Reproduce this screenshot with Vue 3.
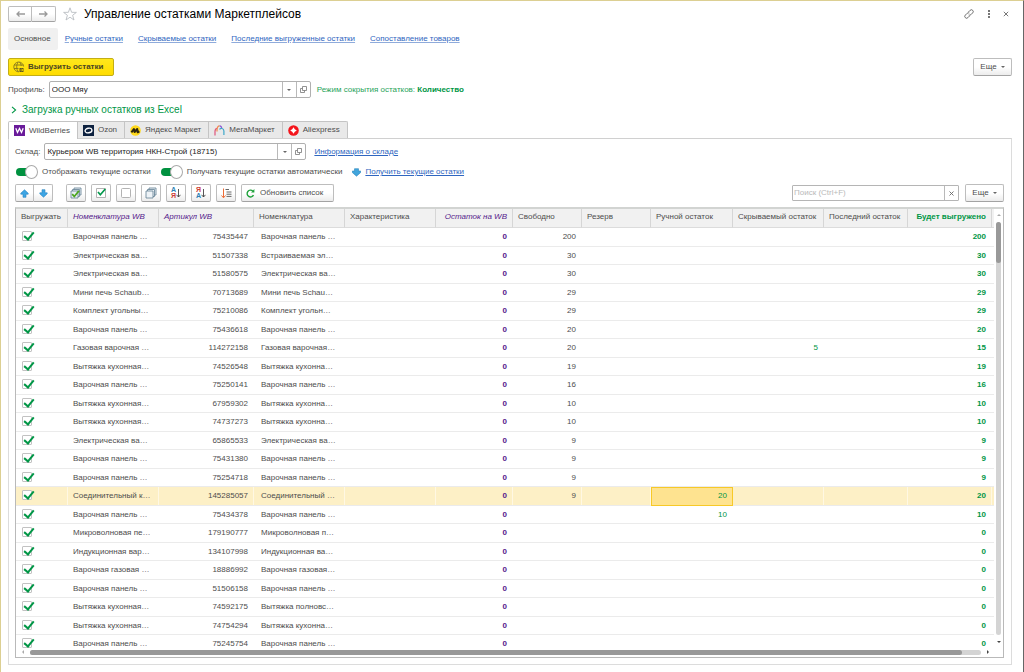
<script setup>
import { ref } from 'vue'

const profile = ref('ООО Мяу')
const warehouse = ref('Курьером WB территория НКН-Строй (18715)')
const search = ref('')
const showCurrent = ref(true)
const autoFetch = ref(true)

const sections = ['Ручные остатки', 'Скрываемые остатки', 'Последние выгруженные остатки', 'Сопоставление товаров']

const columns = [
  { title: 'Выгружать', width: 52 },
  { title: 'Номенклатура WB', width: 91, kind: 'wb' },
  { title: 'Артикул WB', width: 95, kind: 'wb' },
  { title: 'Номенклатура', width: 91 },
  { title: 'Характеристика', width: 91 },
  { title: 'Остаток на WB', width: 77, kind: 'wb end' },
  { title: 'Свободно', width: 69 },
  { title: 'Резерв', width: 69 },
  { title: 'Ручной остаток', width: 82 },
  { title: 'Скрываемый остаток', width: 91 },
  { title: 'Последний остаток', width: 84 },
  { title: 'Будет выгружено', width: 84, kind: 'total end' },
  { title: '', width: 4 }
]

const toRow = ([wbName, article, name, free, manual, hidden, total]) =>
  ({ checked: true, wbName, article, name, free, manual, hidden, total })

const rows = ref([
  ['Варочная панель …', '75435447', 'Варочная панель …', '200', '', '', '200'],
  ['Электрическая ва…', '51507338', 'Встраиваемая эл…', '30', '', '', '30'],
  ['Электрическая ва…', '51580575', 'Электрическая ва…', '30', '', '', '30'],
  ['Мини печь Schaub…', '70713689', 'Мини печь Schau…', '29', '', '', '29'],
  ['Комплект угольны…', '75210086', 'Комплект угольн…', '29', '', '', '29'],
  ['Варочная панель …', '75436618', 'Варочная панель …', '20', '', '', '20'],
  ['Газовая варочная …', '114272158', 'Газовая варочная…', '20', '', '5', '15'],
  ['Вытяжка кухонная…', '74526548', 'Вытяжка кухонна…', '19', '', '', '19'],
  ['Варочная панель …', '75250141', 'Варочная панель …', '16', '', '', '16'],
  ['Вытяжка кухонная…', '67959302', 'Вытяжка кухонна…', '10', '', '', '10'],
  ['Вытяжка кухонная…', '74737273', 'Вытяжка кухонна…', '10', '', '', '10'],
  ['Электрическая ва…', '65865533', 'Электрическая ва…', '9', '', '', '9'],
  ['Варочная панель …', '75431380', 'Варочная панель …', '9', '', '', '9'],
  ['Варочная панель …', '75254718', 'Варочная панель …', '9', '', '', '9'],
  ['Соединительный к…', '145285057', 'Соединительный …', '9', '20', '', '20'],
  ['Варочная панель …', '75434378', 'Варочная панель …', '', '10', '', '10'],
  ['Микроволновая пе…', '179190777', 'Микроволновая п…', '', '', '', '0'],
  ['Индукционная вар…', '134107998', 'Индукционная ва…', '', '', '', '0'],
  ['Варочная газовая …', '18886992', 'Варочная газовая…', '', '', '', '0'],
  ['Варочная панель …', '51506158', 'Варочная панель …', '', '', '', '0'],
  ['Вытяжка кухонная…', '74592175', 'Вытяжка полновс…', '', '', '', '0'],
  ['Вытяжка кухонная…', '74754294', 'Вытяжка кухонна…', '', '', '', '0'],
  ['Варочная панель …', '75245754', 'Варочная панель …', '', '', '', '0']
].map(toRow))

const selected = ref(14)
</script>

<template>
  <main class="window">
    <header class="titlebar">
      <div class="pair">
        <button class="btn" type="button" aria-label="Назад">
          <svg width="11" height="8" viewBox="0 0 11 8"><path d="M4.500 1.500 2 4l2.500 2.500M2 4H10" fill="none" stroke="#999" stroke-width="1.300" /></svg>
        </button>
        <button class="btn" type="button" aria-label="Вперёд">
          <svg width="11" height="8" viewBox="0 0 11 8"><path d="M6.500 1.500 9 4 6.500 6.500M9 4H1" fill="none" stroke="#999" stroke-width="1.300" /></svg>
        </button>
      </div>
      <svg class="star" width="14" height="14" viewBox="0 0 14 14"><path d="M7 .8l1.600 4.500 4.800.1-3.800 2.900 1.400 4.700L7 10.200 3 13l1.400-4.700L.6 5.400l4.800-.1z" fill="#fff" stroke="#b9bdc2" stroke-width=".9" /></svg>
      <h1>Управление остатками Маркетплейсов</h1>
      <div class="window-tools">
        <button class="plain" type="button" aria-label="Ссылка">
          <svg width="12" height="12" viewBox="0 0 12 12" fill="none" stroke="#666" stroke-width=".9"><g transform="rotate(-45 6 6)"><path d="M5 7.800H2.600a1.800 1.800 0 0 1 0-3.600h2.600a1.800 1.800 0 0 1 1.700 1.300M7 4.200h2.400a1.800 1.800 0 0 1 0 3.600H6.800a1.800 1.800 0 0 1-1.700-1.300" /></g></svg>
        </button>
        <button class="plain" type="button" aria-label="Меню">
          <svg width="4" height="10" viewBox="0 0 4 10" fill="#777"><path d="M1 1h2v2H1zM1 4h2v2H1zM1 7h2v2H1z" /></svg>
        </button>
        <button class="plain" type="button" aria-label="Закрыть">
          <svg width="6" height="6" viewBox="0 0 6 6"><path d="M.8.8l4.400 4.400M5.200.8.8 5.200" stroke="#777" stroke-width="1" /></svg>
        </button>
      </div>
    </header>

    <nav class="sections">
      <span class="current">Основное</span>
      <a v-for="s in sections" :key="s" href="#">{{ s }}</a>
    </nav>

    <div class="commands">
      <button class="btn primary" type="button">
        <svg width="12" height="12" viewBox="0 0 12 12" fill="none" stroke="#857720" stroke-width=".9"><path d="M10.600 5.500A4.900 4.900 0 1 0 6 10.800M1 4h9.300M1 7.500h4.500M5 1.200C3.200 3.500 3.200 8 5.200 10.700M6.500 1.200c1.200 1.200 1.600 2.400 1.700 3.800" /><path d="M6.500 7h4v4h-4z" fill="#5f5820" stroke="none" /><path d="M7.300 9h2.500M8.700 7.900 9.900 9l-1.200 1.100" stroke="#ffe000" stroke-width=".7" /></svg>
        <span>Выгрузить остатки</span>
      </button>
      <button class="btn more" type="button">Еще <i class="caret"></i></button>
    </div>

    <div class="field-row">
      <label for="profile">Профиль:</label>
      <div class="combo">
        <input id="profile" v-model="profile" type="text">
        <button type="button" aria-label="Выбрать профиль"><i class="caret"></i></button>
        <button type="button" aria-label="Открыть профиль">
          <svg width="7" height="7" viewBox="0 0 7 7" fill="none" stroke="#777" stroke-width=".8"><path d="M2.500.5h4v4h-4zM2.500 2.500h-2v4h4v-2" /></svg>
        </button>
      </div>
      <p class="mode">Режим сокрытия остатков: <b>Количество</b></p>
    </div>

    <button class="group" type="button">
      <svg width="6" height="8" viewBox="0 0 6 8"><path d="M1 .8 4.600 4 1 7.200" fill="none" stroke="#009646" stroke-width="1.100" /></svg>
      <span>Загрузка ручных остатков из Excel</span>
    </button>

    <div class="tabs" role="tablist">
      <button class="tab active" type="button" role="tab" aria-selected="true">
        <svg width="11" height="11" viewBox="0 0 11 11"><path d="M0 0h11v11H0z" fill="#6a1b9a" /><path d="M1.800 3.300l1.700 4.200 2-4 2 4 1.700-4.200" fill="none" stroke="#fff" stroke-width="1.300" /></svg>
        WildBerries
      </button>
      <button class="tab" type="button" role="tab">
        <svg width="11" height="11" viewBox="0 0 11 11"><path d="M0 0h11v11H0z" fill="#0e2240" /><ellipse cx="5.500" cy="5.500" rx="3.500" ry="2.300" fill="none" stroke="#fff" stroke-width="1.300" transform="rotate(-12 5.500 5.500)" /></svg>
        Ozon
      </button>
      <button class="tab" type="button" role="tab">
        <svg width="11" height="11" viewBox="0 0 11 11"><circle cx="5.500" cy="5.500" r="5.300" fill="#ffd91a" /><path d="M1.400 7.400 3.900 4l.7 3L7.200 4l.5 3.300 1.700-.9" fill="none" stroke="#2b2410" stroke-width="2" stroke-linejoin="round" /></svg>
        Яндекс Маркет
      </button>
      <button class="tab" type="button" role="tab">
        <svg width="11" height="11" viewBox="0 0 11 11" fill="none" stroke-width="1.200"><path d="M1 10.500V6.500C1 4.200 2 3.400 3.200 3.400" stroke="#e0557c" /><path d="M3 6.500V5.500C3 2 4.200.8 5.600.8" stroke="#f08a4c" /><path d="M5.600.8C7.200.8 7.800 2.200 7.800 4" stroke="#8d5bd6" /><path d="M5.600 4.500C6 3 9.800 2.800 9.900 6v4" stroke="#3fa7c9" /></svg>
        МегаМаркет
      </button>
      <button class="tab" type="button" role="tab">
        <svg width="11" height="11" viewBox="0 0 11 11"><circle cx="5.500" cy="5.500" r="5.300" fill="#f4151c" /><path d="M5.500 2.200 6.800 4.200 8.800 5.500 6.800 6.800 5.500 8.800 4.200 6.800 2.200 5.500 4.200 4.200z" fill="#fff" /></svg>
        Aliexpress
      </button>
    </div>

    <section class="panel">
      <div class="field-row">
        <label for="warehouse">Склад:</label>
        <div class="combo">
          <input id="warehouse" v-model="warehouse" type="text">
          <button type="button" aria-label="Выбрать склад"><i class="caret"></i></button>
          <button type="button" aria-label="Открыть склад">
            <svg width="7" height="7" viewBox="0 0 7 7" fill="none" stroke="#777" stroke-width=".8"><path d="M2.500.5h4v4h-4zM2.500 2.500h-2v4h4v-2" /></svg>
          </button>
        </div>
        <a class="info" href="#">Информация о складе</a>
      </div>

      <div class="switches">
        <label><input v-model="showCurrent" class="switch" type="checkbox">Отображать текущие остатки</label>
        <label><input v-model="autoFetch" class="switch" type="checkbox">Получать текущие остатки автоматически</label>
        <a href="#">
          <svg width="9" height="9" viewBox="0 0 9 9"><path d="M2.500.7h4v2.300h2.200v1.500L4.500 8.200.3 4.500V3h2.200z" fill="#42a5dc" stroke="#2c86bd" stroke-width=".6" /></svg>
          <span>Получить текущие остатки</span>
        </a>
      </div>

      <div class="toolbar">
        <div class="pair">
          <button class="btn" type="button" aria-label="Переместить вверх">
            <svg width="9" height="9" viewBox="0 0 9 9"><path d="M3 8.300h3V5.200h2.200v-1L4.500.8.8 4.200v1H3z" fill="#3da5e4" stroke="#2a84c0" stroke-width=".6" /></svg>
          </button>
          <button class="btn" type="button" aria-label="Переместить вниз">
            <svg width="9" height="9" viewBox="0 0 9 9"><path d="M3 .7h3v3.100h2.200v1L4.500 8.200.8 4.800v-1H3z" fill="#3da5e4" stroke="#2a84c0" stroke-width=".6" /></svg>
          </button>
        </div>
        <div class="tools">
          <button class="btn tool" type="button" aria-label="Выбрать все">
            <svg width="12" height="12" viewBox="0 0 12 12" fill="#e8eef3" stroke="#5f7d92" stroke-width=".8"><path d="M4 1h7v7H4z" /><path d="M2.500 2.500h7v7h-7z" /><path d="M1 4h7v7H1z" /><path d="M2.200 7.200 4.300 9.500 9 3.800" fill="none" stroke="#4aa51c" stroke-width="1.800" /></svg>
          </button>
          <button class="btn tool" type="button" aria-label="Установить флажки">
            <svg width="12" height="12" viewBox="0 0 12 12" fill="none"><path d="M1.500 1.500h9v9h-9z" fill="#fff" stroke="#aaa" stroke-width=".9" /><path d="M3 5 5.300 7.700 10.300 2" stroke="#00984a" stroke-width="1.700" /></svg>
          </button>
          <button class="btn tool" type="button" aria-label="Снять флажки">
            <svg width="12" height="12" viewBox="0 0 12 12"><rect x="1.500" y="1.500" width="9" height="9" rx="1" fill="#fff" stroke="#aaa" stroke-width=".9" /></svg>
          </button>
          <button class="btn tool" type="button" aria-label="Снять все">
            <svg width="12" height="12" viewBox="0 0 12 12" fill="#eef3f7" stroke="#5f7d92" stroke-width=".8"><path d="M4 1h7v7H4z" /><path d="M2.500 2.500h7v7h-7z" /><path d="M1 4h7v7H1z" /></svg>
          </button>
          <button class="btn tool" type="button" aria-label="Сортировать по возрастанию">
            <span class="letters"><b class="blue">А</b><b class="red">Я</b></span>
            <svg width="5" height="9" viewBox="0 0 5 9"><path d="M2.500 0v8M.5 5.800l2 2.200 2-2.200" fill="none" stroke="#444" stroke-width=".9" /></svg>
          </button>
          <button class="btn tool" type="button" aria-label="Сортировать по убыванию">
            <span class="letters"><b class="red">Я</b><b class="blue">А</b></span>
            <svg width="5" height="9" viewBox="0 0 5 9"><path d="M2.500 0v8M.5 5.800l2 2.200 2-2.200" fill="none" stroke="#444" stroke-width=".9" /></svg>
          </button>
          <button class="btn tool" type="button" aria-label="Настроить порядок">
            <svg width="11" height="11" viewBox="0 0 11 11" fill="none"><path d="M2.500.5v9M.5 7.500l2 2.300 2-2.300" stroke="#ee6b35" /><path d="M4.500 1.500H8M5.500 4H10.500M5.500 6.200H10.500M5.500 8.400H10.500" stroke="#666" stroke-width="1" /></svg>
          </button>
          <button class="btn refresh" type="button">
            <svg width="9" height="9" viewBox="0 0 9 9"><path d="M7.500 6.200A3.400 3.400 0 1 1 6.800 2" fill="none" stroke="#20a23c" stroke-width="1.400" /><path d="M5 3.400h3.400V0z" fill="#20a23c" /></svg>
            Обновить список
          </button>
        </div>
        <div class="search">
          <input v-model="search" type="search" placeholder="Поиск (Ctrl+F)" aria-label="Поиск">
          <button type="button" aria-label="Очистить">
            <svg width="5" height="5" viewBox="0 0 5 5"><path d="M.5.5l4 4M4.500.5l-4 4" stroke="#666" stroke-width=".9" /></svg>
          </button>
        </div>
        <button class="btn more" type="button">Еще <i class="caret"></i></button>
      </div>

      <div class="grid-frame">
        <div class="grid-view">
          <table>
            <colgroup>
              <col v-for="(c, i) in columns" :key="i" :style="{ width: c.width + 'px' }">
            </colgroup>
            <thead>
              <tr>
                <th v-for="(c, i) in columns" :key="i" :class="c.kind" scope="col">{{ c.title }}</th>
              </tr>
            </thead>
            <tbody>
              <tr v-for="(r, i) in rows" :key="r.article" :class="{ selected: i === selected }" @click="selected = i">
                <td class="tick"><input v-model="r.checked" type="checkbox" :aria-label="'Выгружать ' + r.article"></td>
                <td class="name">{{ r.wbName }}</td>
                <td class="num">{{ r.article }}</td>
                <td class="name second">{{ r.name }}</td>
                <td></td>
                <td class="num wb-stock">0</td>
                <td class="num">{{ r.free }}</td>
                <td></td>
                <td class="num green" :class="{ cursor: i === selected }">{{ r.manual }}</td>
                <td class="num green">{{ r.hidden }}</td>
                <td></td>
                <td class="num sum">{{ r.total }}</td>
                <td></td>
              </tr>
            </tbody>
          </table>
        </div>
        <div class="vscroll">
          <i class="arrow up"></i>
          <div class="track"><div class="thumb"></div></div>
          <i class="arrow down"></i>
        </div>
        <div class="hscroll">
          <i class="arrow left"></i>
          <div class="track"><div class="thumb"></div></div>
          <i class="arrow right"></i>
        </div>
      </div>
    </section>
  </main>
</template>

<style>
body {
  margin: 0;
  background: #fff;
}
</style>

<style scoped>
* {
  box-sizing: border-box;
}

.window {
  display: flex;
  flex-direction: column;
  height: 100vh;
  padding: 4px 11px 7px 7px;
  border: 1px solid #dccf92;
  border-right-color: #666;
  border-bottom: 0;
  background: #fff;
  color: #4d4d4d;
  font-family: "Liberation Sans", Arial, sans-serif;
  font-size: 8px;
  line-height: 10px;
}

button,
input {
  margin: 0;
  padding: 0;
  border: 0;
  background: none;
  color: inherit;
  font: inherit;
}

svg {
  display: block;
  flex: none;
}

a {
  color: #2f66c0;
  text-decoration: underline;
}

.btn {
  display: flex;
  align-items: center;
  justify-content: center;
  height: 18px;
  border: 1px solid #bdbdbd;
  border-bottom-color: #a3a3a3;
  border-radius: 2px;
  background: linear-gradient(#fff, #fff 50%, #ececec);
  white-space: nowrap;
}

.pair {
  display: flex;
}

.pair .btn {
  width: 24px;
}

.pair .btn:first-child {
  border-radius: 2px 0 0 2px;
}

.pair .btn:last-child {
  border-left: 0;
  border-radius: 0 2px 2px 0;
}

.titlebar {
  display: flex;
  align-items: center;
  height: 18px;
}

.titlebar .btn {
  height: 16px;
}

.star {
  margin: 0 7px;
}

h1 {
  flex: 1;
  margin: 0;
  color: #000;
  font-size: 12px;
  font-weight: 400;
  line-height: 16px;
}

.window-tools {
  display: flex;
  align-items: center;
  gap: 12px;
  padding-right: 3px;
}

.sections {
  display: flex;
  align-items: center;
  gap: 15px;
  margin-top: 5px;
}

.sections a {
  text-decoration-color: #8fabdb;
}

.sections .current {
  margin-right: -8px;
  padding: 6px 7px 6px 6px;
  border-radius: 2px;
  background: #f0f0f0;
}

.commands {
  display: flex;
  justify-content: space-between;
  margin-top: 8px;
}

.primary {
  gap: 3px;
  padding: 0 10px 0 4px;
  border-color: #c3ae15;
  background: linear-gradient(#ffe81c, #ffdc00);
  color: #4a4624;
  font-weight: 700;
}

.more {
  gap: 4px;
  width: 39px;
}

.caret {
  width: 0;
  border: 2px solid transparent;
  border-top-color: #666;
  border-bottom: 0;
}

.field-row {
  display: flex;
  align-items: center;
  gap: 4px;
}

.commands + .field-row {
  margin-top: 5px;
}

.combo {
  display: flex;
  width: 262px;
  height: 17px;
  border: 1px solid #b0b0b0;
  border-radius: 2px;
}

.combo input {
  flex: 1;
  min-width: 0;
  padding-left: 2px;
  color: #222;
}

.combo button,
.search button {
  display: flex;
  align-items: center;
  justify-content: center;
  width: 14px;
  border-left: 1px solid #b9b9b9;
}

.mode {
  margin: 0 0 0 2px;
  color: #1fa35a;
}

.mode b {
  color: #009646;
}

.group {
  display: flex;
  align-items: center;
  align-self: flex-start;
  gap: 5px;
  margin: 5px 0 4px 3px;
  color: #009646;
  font-size: 10px;
  line-height: 14px;
}

.tabs {
  display: flex;
  flex: none;
  height: 17px;
}

.tab {
  display: flex;
  align-items: center;
  gap: 4px;
  padding: 0 7px 0 5px;
  border: 1px solid #c4c4c4;
  border-bottom: 0;
  border-left: 0;
  background: #e9e9e9;
}

.tab.active {
  z-index: 1;
  height: 18px;
  border-left: 1px solid #c4c4c4;
  border-radius: 2px 0 0 0;
  background: #fff;
}

.tab:last-child {
  border-radius: 0 2px 0 0;
}

.panel {
  display: flex;
  flex: 1;
  flex-direction: column;
  min-height: 0;
  padding: 4px 7px 6px 6px;
  border: 1px solid #dcdcdc;
  border-top-color: #d0d0d0;
}

.info {
  margin-left: 4px;
}

.switches {
  display: flex;
  align-items: center;
  gap: 10px;
  margin-top: 6px;
  padding-left: 1px;
}

.switches label,
.switches a {
  display: flex;
  align-items: center;
  gap: 4px;
}

.switch {
  display: flex;
  align-items: center;
  width: 22px;
  height: 12px;
  appearance: none;
}

.switch::before {
  width: 16px;
  height: 8px;
  border-radius: 4px;
  background: #00913f;
  content: "";
}

.switch::after {
  width: 12px;
  height: 12px;
  margin-left: -6px;
  border: 1px solid #aaa;
  border-radius: 50%;
  background: #fff;
  content: "";
}

.switch:not(:checked)::before {
  background: #bbb;
}

.toolbar {
  display: flex;
  align-items: center;
  margin-top: 6px;
}

.toolbar .pair .btn {
  width: 19px;
}

.tools {
  display: flex;
  flex: 1;
  gap: 5px;
  margin-left: 13px;
}

.tool {
  width: 20px;
}

.letters {
  display: flex;
  flex-direction: column;
  font-size: 7px;
  line-height: 6px;
}

.blue {
  color: #2c7fb4;
}

.red {
  color: #cc3c36;
}

.refresh {
  gap: 5px;
  padding: 0 10px 0 4px;
}

.search {
  display: flex;
  width: 167px;
  height: 16px;
  margin-right: 6px;
  border: 1px solid #b5b5b5;
  border-radius: 1px;
}

.search input {
  flex: 1;
  min-width: 0;
  padding-left: 1px;
  appearance: none;
}

.search input::placeholder {
  color: #b9b9b9;
}

.grid-frame {
  display: grid;
  flex: 1;
  grid-template-columns: 1fr 9px;
  grid-template-rows: 1fr 8px;
  min-height: 0;
  margin-top: 5px;
  border: 1px solid #b9b9b9;
  border-top: 2px solid #d2d4d2;
}

.grid-view {
  overflow: hidden;
  min-height: 0;
}

table {
  width: 100%;
  border-collapse: separate;
  border-spacing: 0;
  table-layout: fixed;
}

th {
  height: 19px;
  padding: 0 0 2px 5px;
  border-right: 1px solid #d6d6d6;
  border-bottom: 1px solid #dcdcdc;
  background: #f1f1f1;
  font-weight: 400;
  text-align: left;
  white-space: nowrap;
}

th:last-child {
  padding: 0;
  border-right: 0;
}

.wb {
  color: #551a8b;
  font-style: italic;
}

.end {
  padding: 0 5px 2px 0;
  text-align: right;
}

.total {
  color: #009646;
  font-weight: 700;
}

td {
  height: 19px;
  padding: 0;
  border-bottom: 1px solid #ebebeb;
  overflow: hidden;
  white-space: nowrap;
}

tr:nth-child(even) td {
  height: 18px;
}

.tick {
  padding: 0 0 2px 6px;
}

.tick input {
  display: block;
  width: 10px;
  height: 10px;
  border: 1px solid #c2c2c2;
  border-radius: 1px;
  background: #fff;
  appearance: none;
}

.tick input:checked::after {
  display: block;
  width: 4px;
  height: 8px;
  margin: -2px 0 0 3px;
  border: solid #009646;
  border-width: 0 2px 2px 0;
  content: "";
  transform: rotate(40deg);
}

.name {
  padding-left: 5px;
}

.second {
  padding-left: 7px;
}

.num {
  padding-right: 6px;
  text-align: right;
}

.wb-stock {
  color: #551a8b;
  font-weight: 700;
}

.green,
.sum {
  color: #009646;
}

.sum {
  font-weight: 700;
}

.selected td {
  background: #fdf0c6;
  box-shadow: inset -1px 0 #fff8e3;
}

.selected .cursor {
  outline: 1px solid #f7c928;
  outline-offset: -1px;
  background: #fee390;
}

.vscroll {
  display: flex;
  flex-direction: column;
  align-items: center;
  justify-content: space-between;
  padding: 5px 0 6px;
}

.vscroll .track {
  flex: 1;
  width: 5px;
  margin: 6px 0;
  border-radius: 3px;
  background: #d4d4d4;
}

.vscroll .thumb {
  height: 10%;
  border-radius: 3px;
  background: #999;
}

.hscroll {
  display: flex;
  grid-column: 1 / -1;
  align-items: center;
  padding: 0 14px 2px 6px;
}

.hscroll .track {
  flex: 1;
  height: 5px;
  margin: 0 6px;
  border-radius: 3px;
  background: #d4d4d4;
}

.hscroll .thumb {
  width: 98%;
  height: 5px;
  border-radius: 3px;
  background: #999;
}

.arrow {
  border: 2px solid transparent;
}

.up {
  border-top: 0;
  border-bottom-color: #aaa;
}

.down {
  border-top-color: #444;
  border-bottom: 0;
}

.left {
  border-right-color: #aaa;
  border-left: 0;
}

.right {
  border-right: 0;
  border-left-color: #444;
}
</style>
